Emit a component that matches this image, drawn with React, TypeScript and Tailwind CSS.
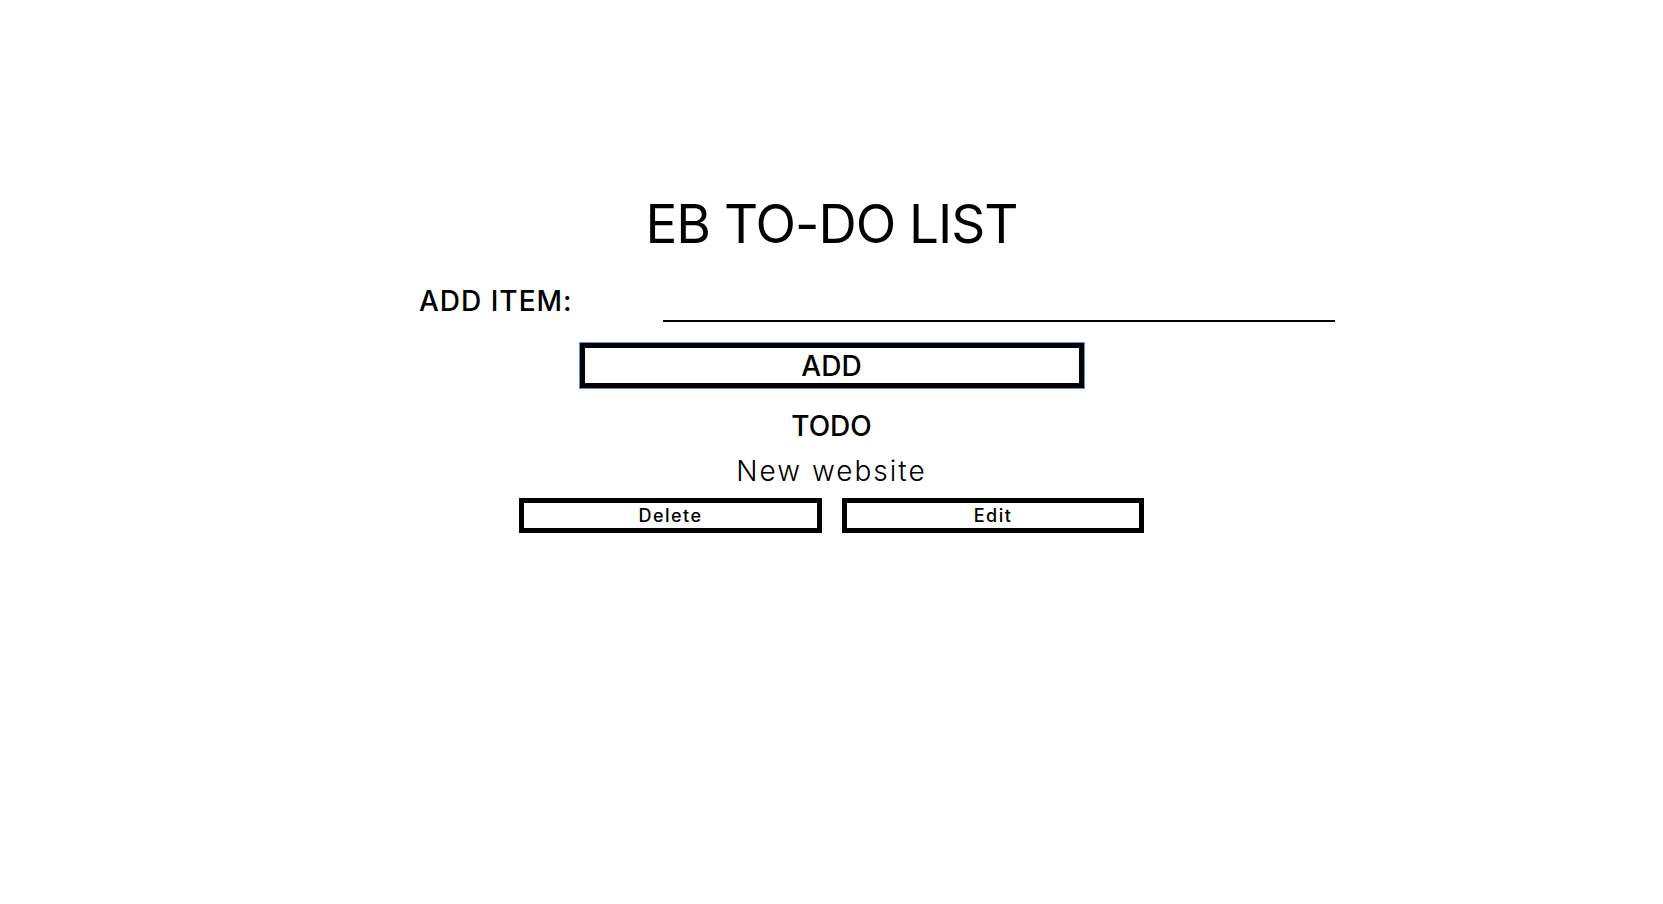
import { useState } from "react";

const font = { fontFamily: "Inter, 'Open Sans', sans-serif" };

export default function App() {
  const [text, setText] = useState("");
  const [items] = useState<string[]>(["New website"]);

  return (
    <div className="min-h-[904px] bg-white text-black" style={font}>
      <div className="flex flex-col items-center pt-[192px]">
        <h1 className="text-[53px] leading-[64px] font-normal tracking-[-1px]">EB TO-DO LIST</h1>

        {/* add item row */}
        <div className="flex justify-center w-full mt-[24px]">
          <div className="ml-[91px] flex w-[916px] items-start">
            <label className="mt-[7px] w-[244px] text-[28px] leading-[28px] font-medium tracking-[1px]">ADD ITEM:</label>
            <input
              value={text}
              onChange={(e) => setText(e.target.value)}
              className="h-[42px] w-[672px] border-b-2 border-black bg-transparent text-[24px] outline-none"
            />
          </div>
        </div>

        <button className="mt-[21px] flex h-[45px] w-[504px] items-center justify-center border-[5px] border-black bg-white text-[28px] leading-[28px] font-medium outline outline-1 outline-[#5b8ff0]">
          ADD
        </button>

        <h2 className="mt-[24px] text-[28px] leading-[28px] font-medium">TODO</h2>

        {items.map((item, idx) => (
          <div key={idx} className="flex flex-col items-center">
            <p className="mt-[17px] text-[28px] leading-[28px] font-light tracking-[2px]">{item}</p>
            <div className="mt-[13px] flex gap-[20px]">
              <button className="flex h-[35px] w-[303px] items-center justify-center border-[5px] border-black bg-white text-[18px] leading-[18px] font-medium tracking-[1.5px]">
                Delete
              </button>
              <button className="flex h-[35px] w-[302px] items-center justify-center border-[5px] border-black bg-white text-[18px] leading-[18px] font-medium tracking-[1.5px]">
                Edit
              </button>
            </div>
          </div>
        ))}
      </div>
    </div>
  );
}
